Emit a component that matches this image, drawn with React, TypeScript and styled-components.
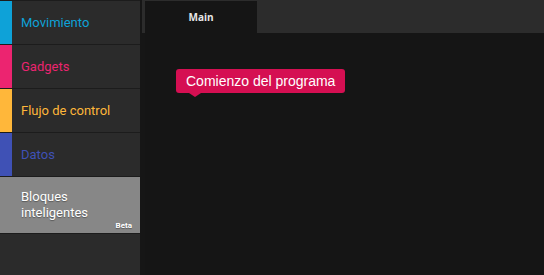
import React from 'react';
import styled, { createGlobalStyle } from 'styled-components';

const GlobalStyle = createGlobalStyle`
  html, body {
    margin: 0;
    padding: 0;
    background: #151515;
  }
  * {
    box-sizing: border-box;
  }
`;

const Layout = styled.div`
  display: flex;
  width: 544px;
  height: 275px;
  overflow: hidden;
  font-family: Roboto, 'Liberation Sans', sans-serif;
`;

const Sidebar = styled.nav`
  width: 140px;
  flex-shrink: 0;
  background: #2b2b2b;
  display: flex;
  flex-direction: column;
  border-top: 1px solid #1c1c1c;
`;

const Category = styled.div<{ color: string }>`
  display: flex;
  align-items: center;
  height: 44px;
  flex-shrink: 0;
  border-bottom: 1px solid #1c1c1c;
  color: ${(p) => p.color};
  font-size: 13px;
  &::before {
    content: '';
    align-self: stretch;
    width: 12px;
    margin-right: 9px;
    background: ${(p) => p.color};
  }
`;

const SmartBlocks = styled.div`
  position: relative;
  height: 57px;
  flex-shrink: 0;
  background: #878787;
  border-bottom: 1px solid #1c1c1c;
  color: #fff;
  font-size: 13px;
  line-height: 16px;
  padding: 12px 0 0 21px;
  text-shadow: 0 1px 1px rgba(0, 0, 0, 0.35);
`;

const Beta = styled.span`
  position: absolute;
  right: 8px;
  bottom: 2px;
  font-size: 8px;
  font-weight: 700;
  line-height: 10px;
`;

const ScrollTrack = styled.div`
  width: 5px;
  flex-shrink: 0;
  background: #161616;
  display: flex;
  justify-content: flex-end;
`;

const ScrollThumb = styled.div`
  width: 3px;
  height: 33px;
  background: #2c2c2c;
`;

const Main = styled.main`
  flex: 1;
  display: flex;
  flex-direction: column;
`;

const TabBar = styled.div`
  height: 33px;
  background: #2c2c2c;
  display: flex;
  align-items: flex-end;
`;

const Tab = styled.div<{ active?: boolean }>`
  width: 112px;
  height: 32px;
  background: ${(p) => (p.active ? '#151515' : 'transparent')};
  color: #e6e6e6;
  font-family: 'Open Sans', 'Liberation Sans', sans-serif;
  font-size: 10px;
  font-weight: 700;
  text-align: center;
  line-height: 32px;
`;

const Canvas = styled.div`
  position: relative;
  flex: 1;
  background: #151515;
`;

const StartBlock = styled.div`
  position: absolute;
  left: 31px;
  top: 36px;
  height: 24px;
  padding: 0 10px;
  background: #d50f52;
  border-radius: 3px;
  color: #fff;
  font-family: 'Liberation Sans', Arial, sans-serif;
  font-size: 14px;
  line-height: 24px;
  &::after {
    content: '';
    position: absolute;
    left: 13px;
    bottom: -4px;
    border-left: 6px solid transparent;
    border-right: 6px solid transparent;
    border-top: 4px solid #d50f52;
  }
`;

const categories = [
  { label: 'Movimiento', color: '#0ea2d8' },
  { label: 'Gadgets', color: '#ec2470' },
  { label: 'Flujo de control', color: '#ffb73a' },
  { label: 'Datos', color: '#3f51b5' },
];

export default function App() {
  return (
    <Layout>
      <GlobalStyle />
      <Sidebar>
        {categories.map((c) => (
          <Category key={c.label} color={c.color}>
            {c.label}
          </Category>
        ))}
        <SmartBlocks>
          Bloques
          <br />
          inteligentes
          <Beta>Beta</Beta>
        </SmartBlocks>
      </Sidebar>
      <ScrollTrack>
        <ScrollThumb />
      </ScrollTrack>
      <Main>
        <TabBar>
          <Tab active>Main</Tab>
        </TabBar>
        <Canvas>
          <StartBlock>Comienzo del programa</StartBlock>
        </Canvas>
      </Main>
    </Layout>
  );
}
